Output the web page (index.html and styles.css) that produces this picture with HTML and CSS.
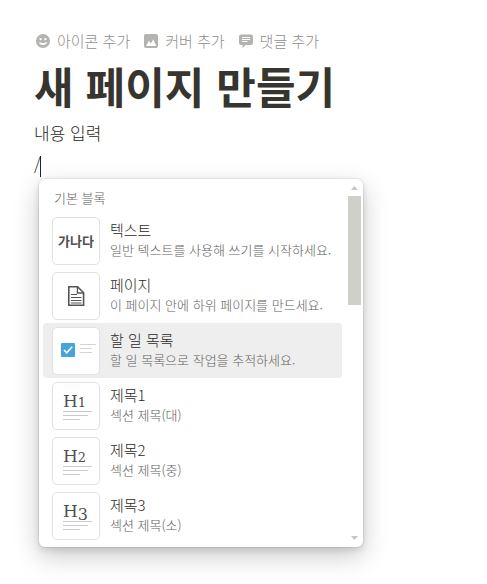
FILE: index.html
```html
<!DOCTYPE html>
<html lang="ko">
<head>
<meta charset="utf-8">
<meta name="viewport" content="width=device-width, initial-scale=1">
<title>새 페이지 만들기</title>
<link rel="stylesheet" href="styles.css">
</head>
<body>
<main class="page">
  <div class="page-actions">
    <button type="button" class="page-action">
      <svg width="14" height="14" viewBox="0 0 14 14"><circle cx="7" cy="7" r="7" fill="#b3b3b1"/><circle cx="4.6" cy="5.2" r="1.1" fill="#fff"/><circle cx="9.4" cy="5.2" r="1.1" fill="#fff"/><path d="M2.800 8q4.200 2.200 8.400 0a4.300 3.800 0 0 1-8.400 0z" fill="#fff"/></svg>
      아이콘 추가
    </button>
    <button type="button" class="page-action">
      <svg width="14" height="14" viewBox="0 0 14 14"><rect width="14" height="14" rx="2" fill="#b3b3b1"/><path d="M2 12l3-5.200 1.800 2.600 2.400-4L12.400 12z" fill="#fff"/></svg>
      커버 추가
    </button>
    <button type="button" class="page-action">
      <svg width="14" height="14" viewBox="0 0 14 14"><path d="M2 .5h10a2 2 0 0 1 2 2v6.500a2 2 0 0 1-2 2H6.600L3.600 14v-3H2a2 2 0 0 1-2-2V2.500a2 2 0 0 1 2-2z" fill="#b3b3b1"/><path d="M3 3.500h8M3 5.500h8M3 7.500h5.500" stroke="#fff" stroke-width="1"/></svg>
      댓글 추가
    </button>
  </div>
  <h1 class="page-title">새 페이지 만들기</h1>
  <p class="block">내용 입력</p>
  <p class="block">/<span class="caret"></span></p>
  <div class="menu">
    <div class="menu-content">
      <h2 class="menu-heading">기본 블록</h2>
      <button type="button" class="item">
        <span class="preview preview-text">가나다</span>
        <span class="item-text"><span class="item-name">텍스트</span><span class="item-description">일반 텍스트를 사용해 쓰기를 시작하세요.</span></span>
      </button>
      <button type="button" class="item">
        <span class="preview"><svg width="46" height="46" viewBox="0 0 46 46"><path d="M15.800 13.800h8.800l6 6v12.400H15.800z" fill="#fff" stroke="#555" stroke-width="1.600"/><path d="M24.400 14v6h6" fill="none" stroke="#555" stroke-width="1.300"/><path d="M18 21.500h6M18 24.500h10.500M18 27.500h10.500M18 30h10.500" stroke="#555" stroke-width="1.200"/></svg></span>
        <span class="item-text"><span class="item-name">페이지</span><span class="item-description">이 페이지 안에 하위 페이지를 만드세요.</span></span>
      </button>
      <button type="button" class="item selected">
        <span class="preview"><svg width="46" height="46" viewBox="0 0 46 46"><rect x="8" y="15" width="14" height="14" rx="1" fill="#46a3dc"/><path d="M11 22l2.700 2.800 5.500-6" fill="none" stroke="#fff" stroke-width="1.600"/><path d="M27 16.500h16M27 20.500h12M27 24.500h12" stroke="#d4d4d4"/></svg></span>
        <span class="item-text"><span class="item-name">할 일 목록</span><span class="item-description">할 일 목록으로 작업을 추적하세요.</span></span>
      </button>
      <button type="button" class="item">
        <span class="preview preview-heading"><span class="glyphs">H<span class="numeral">1</span></span><svg class="lines" width="29" height="9" viewBox="0 0 29 9"><path d="M0 .5h29M0 4.500h25M0 8.500h17" stroke="#cbcbcb"/></svg></span>
        <span class="item-text"><span class="item-name">제목1</span><span class="item-description">섹션 제목(대)</span></span>
      </button>
      <button type="button" class="item">
        <span class="preview preview-heading"><span class="glyphs">H<span class="numeral">2</span></span><svg class="lines" width="29" height="9" viewBox="0 0 29 9"><path d="M0 .5h29M0 4.500h25M0 8.500h17" stroke="#cbcbcb"/></svg></span>
        <span class="item-text"><span class="item-name">제목2</span><span class="item-description">섹션 제목(중)</span></span>
      </button>
      <button type="button" class="item">
        <span class="preview preview-heading"><span class="glyphs">H<span class="numeral descending">3</span></span><svg class="lines" width="29" height="9" viewBox="0 0 29 9"><path d="M0 .5h29M0 4.500h25M0 8.500h17" stroke="#cbcbcb"/></svg></span>
        <span class="item-text"><span class="item-name">제목3</span><span class="item-description">섹션 제목(소)</span></span>
      </button>
    </div>
    <div class="scrollbar">
      <svg class="arrow" width="7" height="4" viewBox="0 0 7 4"><path d="M0 4l3.500-4L7 4z" fill="#c6c6c3"/></svg>
      <div class="track"><div class="scroll-thumb"></div></div>
      <svg class="arrow" width="7" height="4" viewBox="0 0 7 4"><path d="M0 0h7L3.500 4z" fill="#c6c6c3"/></svg>
    </div>
  </div>
</main>
</body>
</html>
```
FILE: styles.css
```css
* {
  box-sizing: border-box;
}

body {
  margin: 0;
  background: #fff;
  color: #2b2924;
  font-family: "Noto Sans CJK KR", sans-serif;
  font-weight: 300;
}

button {
  padding: 0;
  border: 0;
  background: none;
  color: inherit;
  font-family: inherit;
  font-weight: inherit;
  text-align: left;
}

.page {
  min-height: 100vh;
  padding: 29px 34px 36px;
}

.page-actions {
  display: flex;
  gap: 14px;
  padding-left: 2px;
}

.page-action {
  display: flex;
  align-items: center;
  gap: 7px;
  color: #8f8e8b;
  font-size: 15px;
  line-height: 24px;
}

.page-title {
  margin: 4px 0 3px;
  color: #37352f;
  font-size: 43px;
  font-weight: 700;
  line-height: 57px;
}

.block {
  margin: 0;
  font-size: 17px;
  line-height: 31px;
}

.caret {
  display: inline-block;
  width: 1px;
  height: 21px;
  margin-left: -1px;
  background: #222;
  vertical-align: middle;
}

.menu {
  display: flex;
  max-width: 324px;
  margin-left: 5px;
  padding-right: 2px;
  border-radius: 6px;
  background: #fff;
  box-shadow: 0 0 0 1px rgba(15, 15, 15, .06), 0 3px 6px rgba(15, 15, 15, .12), 0 9px 26px rgba(15, 15, 15, .22);
}

.menu-content {
  flex: 1;
  padding: 8px 6px 4px 4px;
}

.menu-heading {
  margin: 0 0 4px;
  padding-left: 11px;
  color: #62615d;
  font-size: 13px;
  font-weight: inherit;
  line-height: 22px;
}

.item {
  display: flex;
  align-items: center;
  gap: 10px;
  width: 100%;
  padding: 4px 9px 3px;
  border-radius: 4px;
}

.selected {
  background: #eee;
}

.preview {
  flex: none;
  width: 48px;
  height: 48px;
  border: 1px solid #e2e2e1;
  border-radius: 5px;
  background: #fff;
  color: #505050;
}

.preview-text {
  font-size: 13px;
  font-weight: 700;
  line-height: 46px;
  text-align: center;
}

.preview-heading {
  padding: 8px 0 0 10px;
  font-family: "DejaVu Serif", serif;
  font-size: 17px;
  font-weight: 400;
}

.glyphs {
  display: block;
  height: 20px;
  line-height: 20px;
}

.numeral {
  font-size: 13px;
}

.descending {
  font-size: 16px;
  line-height: 1;
  vertical-align: -3px;
}

.lines {
  display: block;
}

.item-text {
  display: flex;
  flex-direction: column;
  padding-bottom: 2px;
  white-space: nowrap;
}

.item-name {
  font-size: 15px;
  line-height: 20px;
}

.item-description {
  color: #62615d;
  font-size: 13px;
  line-height: 20px;
}

.scrollbar {
  display: flex;
  flex-direction: column;
  align-items: center;
  width: 13px;
  padding: 7px 0;
}

.arrow {
  flex: none;
}

.track {
  flex: 1;
  width: 100%;
  margin: 6px 0;
}

.scroll-thumb {
  height: 109px;
  background: #d0d0cb;
}
```
